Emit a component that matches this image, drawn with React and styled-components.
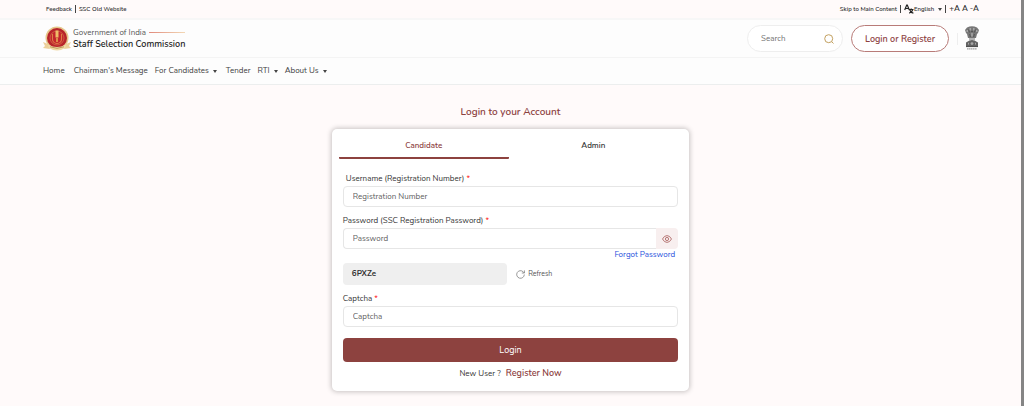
import React, { useState } from "react";
import styled, { createGlobalStyle } from "styled-components";

const menu = [
  { name: "Home", wide: true },
  { name: "Chairman's Message" },
  { name: "For Candidates", drop: true, wide: true },
  { name: "Tender" },
  { name: "RTI", drop: true },
  { name: "About Us", drop: true },
];

function Logo() {
  return (
    <svg width="28" height="26" viewBox="0 0 28 26" aria-hidden="true">
      <circle cx="14" cy="12" r="11.5" fill="#e6c88c" />
      <circle cx="14" cy="12" r="10" fill="#b8242b" />
      <circle cx="14" cy="12" r="7" fill="#c4262d" stroke="#d4744a" strokeWidth="0.7" />
      <path d="M9.5 8v5a4.5 4.5 0 0 0 9 0V8" fill="none" stroke="#dc7f48" strokeWidth="1.1" />
      <path d="M12.5 4.5h3v7h-3z" fill="#efbd68" />
      <path d="M13.2 12h1.6v4h-1.6z" fill="#e5a552" />
      <path d="M0 16l5 2 2 5-7-1 2-2zM28 16l-5 2-2 5 7-1-2-2z" fill="#ecd09a" />
      <path d="M5 18.5q9 5 18 0l-1 3.5q-8 5-16 0z" fill="#f0d9a5" />
      <path d="M7 20.8q7 3 14 0" fill="none" stroke="#b08a48" strokeWidth="0.8" />
    </svg>
  );
}

function Emblem() {
  return (
    <svg width="14" height="25" viewBox="0 0 14 25" aria-hidden="true">
      <path d="M2 1.5Q7-1 12 1.5L14 4l-1 3-1 1-1 4H3L2 8 1 7 0 4z" fill="#777" />
      <path d="M4.5 2h1.6v2.4H4.5zM8 2h1.6v2.4H8zM1.5 4H3v2H1.5zM11 4h1.5v2H11zM6.2 7h1.6v3.5H6.2z" fill="#a6a6a6" />
      <path d="M3.6 3.5l1 3M10.4 3.5l-1 3M6 5.4h2M4.6 8l.8 3M9.4 8l-.8 3" stroke="#4c4c4c" strokeWidth="0.8" />
      <path d="M4 12h6v2.5H4z" fill="#b4b4b4" />
      <path d="M1 16.5Q7 11.5 13 16.5V21H1z" fill="#636363" />
      <circle cx="7" cy="17.6" r="1.4" fill="#a8a8a8" />
      <path d="M3.5 16.8v1.8M10.5 16.8v1.8" stroke="#a8a8a8" strokeWidth="1" />
      <path d="M1 20.6h12" stroke="#484848" strokeWidth="0.8" />
      <path d="M2 22.8h10" stroke="#a0a0a0" strokeWidth="1.2" strokeDasharray="1.6 .4" />
    </svg>
  );
}

function App() {
  const [tab, setTab] = useState("Candidate");
  const [show, setShow] = useState(false);

  return (
    <Page>
      <Global />
      <Content>
        <TopBar>
          <TopLinks>
            <a href="#feedback">Feedback</a>
            <Line />
            <a href="#old">SSC Old Website</a>
          </TopLinks>
          <TopLinks>
            <a href="#login">Skip to Main Content</a>
            <Line />
            <Language>
              <svg width="10" height="10" viewBox="0 0 10 10" aria-hidden="true">
                <path
                  d="M.7 6L2.7 1h.6l2 5M1.5 4.5h3M5 5.5h4.5M7.2 4.6v1M8.8 5.5Q8 8.5 5.2 9.2M5.8 6q1 2.7 3.6 3.2"
                  fill="none"
                  stroke="#222"
                  strokeWidth="1.2"
                />
              </svg>
              English <Caret />
            </Language>
            <Line />
            <Size aria-label="Larger text">+A</Size>
            <Size aria-label="Normal text">A</Size>
            <Size aria-label="Smaller text">-A</Size>
          </TopLinks>
        </TopBar>

        <Header>
          <Brand href="#home">
            <Logo />
            <BrandText>
              <Gov>
                Government of India <Stripe />
              </Gov>
              <Name>Staff Selection Commission</Name>
            </BrandText>
          </Brand>
          <Actions>
            <Search>
              <input type="text" placeholder="Search" aria-label="Search" />
              <button aria-label="Search">
                <svg width="10" height="10" viewBox="0 0 10 10">
                  <circle cx="4.7" cy="4.7" r="4" />
                  <path d="M7.6 7.6l1.9 1.9" />
                </svg>
              </button>
            </Search>
            <LoginRegister>Login or Register</LoginRegister>
            <EmblemBox>
              <Emblem />
            </EmblemBox>
          </Actions>
        </Header>

        <Nav>
          {menu.map((item) => (
            <NavLink key={item.name} href="#menu" $wide={item.wide}>
              {item.name}
              {item.drop && <Caret />}
            </NavLink>
          ))}
        </Nav>

        <Main id="login">
          <Title>Login to your Account</Title>
          <Card>
            <Tabs role="tablist">
              {["Candidate", "Admin"].map((t) => (
                <Tab
                  key={t}
                  role="tab"
                  aria-selected={tab === t}
                  $active={tab === t}
                  onClick={() => setTab(t)}
                >
                  {t}
                </Tab>
              ))}
            </Tabs>
            <Form onSubmit={(e) => e.preventDefault()}>
              <Label htmlFor="user" $inset>
                Username (Registration Number) <Star>*</Star>
              </Label>
              <Input id="user" type="text" placeholder="Registration Number" />

              <Label htmlFor="pass">
                Password (SSC Registration Password) <Star>*</Star>
              </Label>
              <PasswordRow>
                <Input id="pass" type={show ? "text" : "password"} placeholder="Password" />
                <Eye type="button" aria-label="Show password" onClick={() => setShow(!show)}>
                  <svg width="10" height="8" viewBox="0 0 10 8">
                    <path d="M.5 4Q2.2.6 5 .6T9.5 4Q7.8 7.4 5 7.4T.5 4z" />
                    <circle cx="5" cy="4" r="1.6" />
                  </svg>
                </Eye>
              </PasswordRow>
              <Forgot href="#forgot">Forgot Password</Forgot>

              <CaptchaRow>
                <Code>6PXZe</Code>
                <Refresh type="button">
                  <svg width="9" height="9" viewBox="0 0 9 9" aria-hidden="true">
                    <path d="M8.3 4.5A3.8 3.8 0 1 1 7.2 1.8L8.4 3M8.4.4V3H5.8" />
                  </svg>
                  Refresh
                </Refresh>
              </CaptchaRow>

              <Label htmlFor="captcha">
                Captcha <Star>*</Star>
              </Label>
              <Input id="captcha" type="text" placeholder="Captcha" />

              <Submit type="submit">Login</Submit>
              <NewUser>
                New User ? <a href="#register">Register Now</a>
              </NewUser>
            </Form>
          </Card>
        </Main>
      </Content>
      <Scroll />
    </Page>
  );
}

export default App;

const Global = createGlobalStyle`
  * {
    box-sizing: border-box;
  }

  body {
    margin: 0;
    background-color: #fffafa;
    color: #333;
  }

  body, input, button {
    font-family: Nunito, Lato, sans-serif;
    font-size: 8px;
    line-height: 12px;
  }

  a {
    color: inherit;
    text-decoration: none;
  }

  button {
    border: none;
    padding: 0;
    background: none;
    color: inherit;
    cursor: pointer;
  }

  svg {
    flex: none;
    display: block;
  }
`;

const Page = styled.div`
  display: flex;
  min-height: 100vh;
`;

const Content = styled.div`
  flex: 1;
  min-width: 0;
`;

const Scroll = styled.div`
  width: 3px;
  background-color: #858585;
`;

const TopBar = styled.div`
  display: flex;
  justify-content: space-between;
  padding: 3px 42px 3px 46px;
  border-bottom: 2px solid #f7f7f7;
`;

const TopLinks = styled.div`
  display: flex;
  align-items: center;
  font-size: 6px;
  font-weight: 600;
`;

const Line = styled.span`
  width: 1px;
  height: 8px;
  margin: 0 3px;
  background-color: #444;
`;

const Caret = styled.span`
  display: inline-block;
  margin-left: 4px;
  border: 2px solid transparent;
  border-top: 3px solid #444;
  border-bottom: 0;
  vertical-align: middle;
`;

const Language = styled.button`
  display: flex;
  align-items: center;
  font-size: 6px;
  font-weight: 600;
`;

const Size = styled.button`
  font-size: 8px;
  font-weight: 600;
  & + & {
    margin-left: 2px;
  }
`;

const Header = styled.header`
  display: flex;
  justify-content: space-between;
  align-items: center;
  padding: 5px 42px 5px 43px;
  background-color: #fdfdfd;
  border-bottom: 1px solid #f4f4f4;
`;

const Brand = styled.a`
  display: flex;
  align-items: center;
  gap: 2px;
`;

const BrandText = styled.div`
  display: flex;
  flex-direction: column;
`;

const Gov = styled.div`
  display: flex;
  align-items: center;
  gap: 3px;
  line-height: 10px;
  color: #555;
`;

const Stripe = styled.span`
  width: 36px;
  height: 1px;
  background: linear-gradient(to right, #e08a7c, #f3d8b5);
`;

const Name = styled.div`
  font-size: 9px;
  line-height: 12px;
  font-weight: 600;
  color: #222;
`;

const Actions = styled.div`
  display: flex;
  align-items: center;
  gap: 8px;
`;

const Search = styled.div`
  display: flex;
  align-items: center;
  width: 96px;
  height: 27px;
  padding: 0 8px 0 13px;
  background-color: #fff;
  border: 1px solid #eee;
  border-radius: 14px;

  input {
    flex: 1;
    min-width: 0;
    padding: 0;
    border: none;
    outline: none;
    background: none;
  }

  input::placeholder {
    color: #707070;
  }

  svg {
    fill: none;
    stroke: #c2a05f;
  }
`;

const LoginRegister = styled.button`
  width: 98px;
  height: 27px;
  border: 1px solid #b87b78;
  border-radius: 14px;
  background-color: #fff;
  color: #8d423f;
  font-size: 9px;
  font-weight: 600;
`;

const EmblemBox = styled.div`
  padding-left: 8px;
  background: linear-gradient(#eee, #eee) left center / 1px 12px no-repeat;
`;

const Nav = styled.nav`
  display: flex;
  align-items: center;
  padding: 7px 43px;
  background-color: #fdfdfd;
  border-bottom: 1px solid #eceeee;
`;

const NavLink = styled.a`
  margin-right: ${(props) => (props.$wide ? "9px" : "7px")};
  color: #404040;
`;

const Main = styled.main`
  display: flex;
  flex-direction: column;
  align-items: center;
  padding: 21px 0 15px;
`;

const Title = styled.h1`
  margin: 0 0 10px;
  font-size: 10px;
  line-height: 13px;
  font-weight: 600;
  color: #8d423f;
`;

const Card = styled.section`
  width: 35%;
  min-width: 320px;
  padding: 7px 7px 11px;
  background-color: #fff;
  border-radius: 5px;
  box-shadow: 0 0 5px 1px rgba(0, 0, 0, 0.22);
`;

const Tabs = styled.div`
  display: flex;
  padding-right: 4px;
`;

const Tab = styled.button`
  flex: 1;
  padding: 4px 0 5px;
  border-bottom: 2px solid ${(props) => (props.$active ? "#8d423f" : "transparent")};
  border-radius: 1px;
  color: ${(props) => (props.$active ? "#8d423f" : "#333")};
  font-weight: 600;
`;

const Form = styled.form`
  display: flex;
  flex-direction: column;
  padding: 14px 4px 0;
`;

const Label = styled.label`
  margin-bottom: 1px;
  padding-left: ${(props) => (props.$inset ? "3px" : "0")};
`;

const Star = styled.span`
  color: #ff2020;
`;

const Input = styled.input`
  width: 100%;
  height: 21px;
  padding: 0 9px;
  margin-bottom: 8px;
  border: 1px solid #e6e6e6;
  border-radius: 4px;
  background-color: #fff;
  outline: none;

  &::placeholder {
    color: #606060;
  }
`;

const PasswordRow = styled.div`
  display: flex;

  ${Input} {
    margin-bottom: 0;
    border-right: none;
    border-radius: 4px 0 0 4px;
  }
`;

const Eye = styled.button`
  display: flex;
  flex: none;
  align-items: center;
  justify-content: center;
  width: 22px;
  height: 21px;
  border-radius: 0 4px 4px 0;
  background-color: #f8efef;

  svg {
    fill: none;
    stroke: #b06a68;
    stroke-width: 0.9;
  }
`;

const Forgot = styled.a`
  align-self: flex-end;
  padding-right: 3px;
  color: #1f4fdc;
`;

const CaptchaRow = styled.div`
  display: flex;
  align-items: center;
  gap: 9px;
  margin: 2px 0 8px;
`;

const Code = styled.div`
  width: 49%;
  padding: 5px 9px;
  border-radius: 4px;
  background-color: #efefef;
  font-weight: 700;
`;

const Refresh = styled.button`
  display: flex;
  align-items: center;
  gap: 3px;
  font-size: 7px;
  color: #555;

  svg {
    fill: none;
    stroke: #808080;
    stroke-width: 0.8;
  }
`;

const Submit = styled.button`
  height: 24px;
  margin-top: 3px;
  border-radius: 4px;
  background-color: #8d423f;
  color: #fff;
  font-size: 9px;
`;

const NewUser = styled.p`
  margin: 5px 0 0;
  text-align: center;

  a {
    margin-left: 3px;
    font-size: 9px;
    font-weight: 600;
    color: #8d423f;
  }
`;
